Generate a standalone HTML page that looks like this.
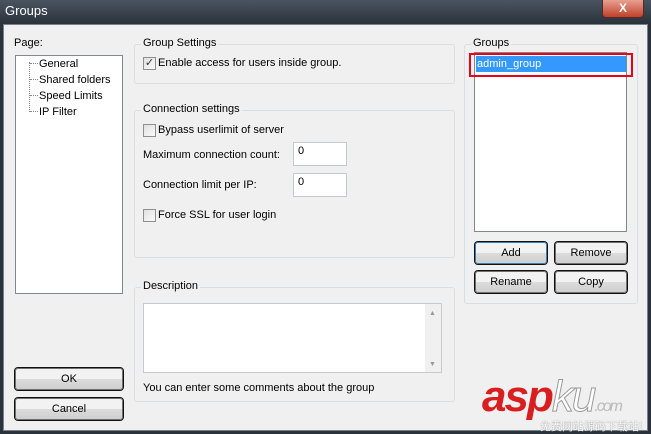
<!DOCTYPE html><html><head><style>
*{margin:0;padding:0;box-sizing:border-box}
body{width:651px;height:434px;overflow:hidden;background:#2a323c;font:11px "Liberation Sans",sans-serif;color:#000;position:relative}
.a{position:absolute}
.title{left:0;top:0;width:651px;height:24px;background:linear-gradient(#4a5460,#2a323b);}
.body{left:3px;top:24px;width:645px;height:407px;background:#f0f0f0;border:1px solid #7a8088}
.grp{position:absolute;border:1px solid #d5dfe5;border-radius:3px}
.lbl{position:absolute;background:#f0f0f0;padding:0 2px}
.btn{position:absolute;border:1px solid #707070;border-radius:3px;background:linear-gradient(#f2f2f2 50%,#dcdcdc 50%,#cfcfcf);text-align:center;line-height:20px;box-shadow:0 0 0 1px #111}
.cb{position:absolute;width:13px;height:13px;border:1px solid #8f8f8f;background:linear-gradient(135deg,#e0e0e0,#fafafa)}
.inp{position:absolute;background:#fff;border:1px solid #c5cad0;padding:2px 4px}
</style></head><body>
<div class="a title"></div>
<div class="a" style="left:5px;top:3px;font-size:13px;color:#fff">Groups</div>
<div class="a" style="left:602px;top:0;width:42px;height:18px;background:linear-gradient(#e8a090,#c0412c);border:1px solid #5a2a22;border-top:none;border-radius:0 0 4px 4px;color:#fff;text-align:center;font-weight:bold;font-size:12px;line-height:16px">X</div>
<div class="a body"></div>
<div class="a" style="left:14px;top:37px">Page:</div>
<div class="a" style="left:15px;top:55px;width:108px;height:239px;background:#fff;border:1px solid #828790"></div>
<div class="a" style="left:29px;top:62px;height:50px;border-left:1px dotted #888"></div>
<div class="a" style="left:30px;top:63px;width:8px;border-top:1px dotted #888"></div>
<div class="a" style="left:30px;top:79px;width:8px;border-top:1px dotted #888"></div>
<div class="a" style="left:30px;top:95px;width:8px;border-top:1px dotted #888"></div>
<div class="a" style="left:30px;top:111px;width:8px;border-top:1px dotted #888"></div>
<div class="a" style="left:39px;top:56px;line-height:16px">General<br>Shared folders<br>Speed Limits<br>IP Filter</div>
<div class="btn" style="left:15px;top:368px;width:108px;height:22px">OK</div>
<div class="btn" style="left:15px;top:398px;width:108px;height:22px">Cancel</div>

<div class="grp" style="left:134px;top:44px;width:321px;height:40px"></div>
<div class="lbl" style="left:141px;top:37px">Group Settings</div>
<div class="cb" style="left:143px;top:57px;color:#333;font-size:11px;line-height:11px;text-align:center">✓</div>
<div class="a" style="left:158px;top:57px">Enable access for users inside group.</div>

<div class="grp" style="left:134px;top:110px;width:321px;height:148px"></div>
<div class="lbl" style="left:141px;top:103px">Connection settings</div>
<div class="cb" style="left:143px;top:124px"></div>
<div class="a" style="left:158px;top:124px">Bypass userlimit of server</div>
<div class="a" style="left:143px;top:149px">Maximum connection count:</div>
<div class="inp" style="left:293px;top:142px;width:54px;height:24px">0</div>
<div class="a" style="left:143px;top:179px">Connection limit per IP:</div>
<div class="inp" style="left:293px;top:173px;width:54px;height:24px">0</div>
<div class="cb" style="left:143px;top:209px"></div>
<div class="a" style="left:158px;top:209px">Force SSL for user login</div>

<div class="grp" style="left:134px;top:287px;width:321px;height:115px"></div>
<div class="lbl" style="left:141px;top:280px">Description</div>
<div class="a" style="left:143px;top:303px;width:299px;height:70px;background:#fff;border:1px solid #c5cad0"></div>
<div class="a" style="left:425px;top:304px;width:16px;height:68px;background:#f0f0f0"></div>
<div class="a" style="left:429px;top:310px;font-size:7px;color:#999">▲</div>
<div class="a" style="left:429px;top:361px;font-size:7px;color:#999">▼</div>
<div class="a" style="left:143px;top:382px">You can enter some comments about the group</div>

<div class="grp" style="left:464px;top:44px;width:174px;height:260px"></div>
<div class="lbl" style="left:471px;top:37px">Groups</div>
<div class="a" style="left:474px;top:52px;width:153px;height:180px;background:#fff;border:1px solid #828790"></div>
<div class="a" style="left:476px;top:56px;width:150px;height:16px;background:#3399ff;color:#fff;padding-left:1px;line-height:16px">admin_group</div>
<div class="a" style="left:469px;top:53px;width:164px;height:24px;border:2px solid #e8001c"></div>
<div class="btn" style="left:475px;top:242px;width:72px;height:22px;border-color:#3c7fb1">Add</div>
<div class="btn" style="left:555px;top:242px;width:72px;height:22px">Remove</div>
<div class="btn" style="left:475px;top:271px;width:72px;height:22px">Rename</div>
<div class="btn" style="left:555px;top:271px;width:72px;height:22px">Copy</div>

<div class="a" style="left:482px;top:372px;font:italic bold 44px 'Liberation Sans',sans-serif;color:#d81e1e;letter-spacing:-2px">asp<span style="color:#fff;font-weight:normal;-webkit-text-stroke:1px #999">ku</span><span style="font-size:16px;color:#bbb;font-weight:normal">.com</span></div>
<div class="a" style="left:540px;top:418px;font:11px 'Noto Sans CJK SC',sans-serif;color:#fff;text-shadow:0 0 1px #666">免费网站源码下载站!</div>
</body></html>
